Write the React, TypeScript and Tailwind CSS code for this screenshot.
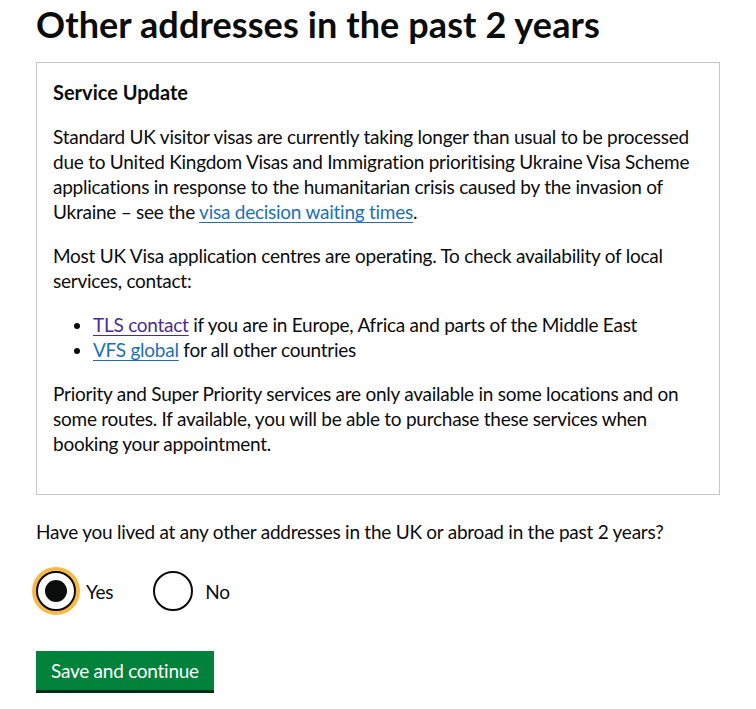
import React from 'react';

const font = "font-['Lato','Liberation_Sans',Arial,sans-serif]";
const body = 'text-[19px] leading-[25px] tracking-[-0.25px]';

const App = () => {
  return (
    <div className={`${font} text-[#0b0c0c] bg-white min-h-[709px] px-[36px] pt-[4px]`}>
      <h1 className="text-[36px] leading-[40px] font-bold tracking-[0.1px] mb-[18px]">
        Other addresses in the past 2 years
      </h1>

      <div className="w-[684px] border border-[#c8c8c8] px-[16px] pt-[15px] pb-[38px]">
        <h2 className="text-[20px] leading-[28px] font-bold mb-[18px]">Service Update</h2>
        <p className={`${body} mb-[19px]`}>
          Standard UK visitor visas are currently taking longer than usual to be processed due to United Kingdom
          Visas and Immigration prioritising Ukraine Visa Scheme applications in response to the humanitarian crisis
          caused by the invasion of Ukraine – see the{' '}
          <a href="#" className="text-[#1d70b8] underline underline-offset-[3px]">
            visa decision waiting times
          </a>
          .
        </p>
        <p className={`${body} mb-[19px]`}>
          Most UK Visa application centres are operating. To check availability of local services, contact:
        </p>
        <ul className={`${body} list-disc pl-[40px] mb-[19px]`}>
          <li>
            <a href="#" className="text-[#4c2c92] underline underline-offset-[3px]">
              TLS contact
            </a>{' '}
            if you are in Europe, Africa and parts of the Middle East
          </li>
          <li>
            <a href="#" className="text-[#1d70b8] underline underline-offset-[3px]">
              VFS global
            </a>{' '}
            for all other countries
          </li>
        </ul>
        <p className={body}>
          Priority and Super Priority services are only available in some locations and on some routes. If
          available, you will be able to purchase these services when booking your appointment.
        </p>
      </div>

      <p className={`${body} mt-[24px] mb-[27px]`}>
        Have you lived at any other addresses in the UK or abroad in the past 2 years?
      </p>

      <div className="flex items-center">
        <label className="flex items-center mr-[40px]">
          <span className="w-[40px] h-[40px] rounded-full border-2 border-[#0b0c0c] bg-white flex items-center justify-center shadow-[0_0_0_4px_#f8b846]">
            <span className="w-[22px] h-[22px] rounded-full bg-[#0b0c0c]" />
          </span>
          <span className={`${body} ml-[10px]`}>Yes</span>
        </label>
        <label className="flex items-center">
          <span className="w-[40px] h-[40px] rounded-full border-2 border-[#0b0c0c] bg-white" />
          <span className={`${body} ml-[12px]`}>No</span>
        </label>
      </div>

      <button
        type="button"
        className={`${body} mt-[40px] bg-[#00823b] text-white px-[15px] pt-[7px] pb-[7px] shadow-[0_3px_0_#002d18]`}
      >
        Save and continue
      </button>
    </div>
  );
};

export default App;
